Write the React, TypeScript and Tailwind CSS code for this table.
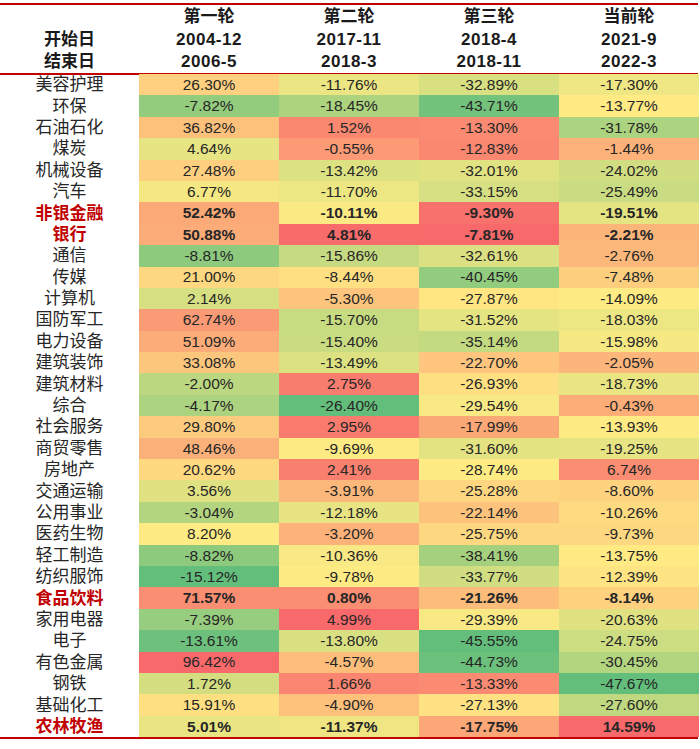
import React from "react";

type Row = { name: string; v: number[]; hl?: boolean };

const rows: Row[] = [
	{ name: "美容护理", v: [26.3, -11.76, -32.89, -17.3] },
	{ name: "环保", v: [-7.82, -18.45, -43.71, -13.77] },
	{ name: "石油石化", v: [36.82, 1.52, -13.3, -31.78] },
	{ name: "煤炭", v: [4.64, -0.55, -12.83, -1.44] },
	{ name: "机械设备", v: [27.48, -13.42, -32.01, -24.02] },
	{ name: "汽车", v: [6.77, -11.7, -33.15, -25.49] },
	{ name: "非银金融", v: [52.42, -10.11, -9.3, -19.51], hl: true },
	{ name: "银行", v: [50.88, 4.81, -7.81, -2.21], hl: true },
	{ name: "通信", v: [-8.81, -15.86, -32.61, -2.76] },
	{ name: "传媒", v: [21.0, -8.44, -40.45, -7.48] },
	{ name: "计算机", v: [2.14, -5.3, -27.87, -14.09] },
	{ name: "国防军工", v: [62.74, -15.7, -31.52, -18.03] },
	{ name: "电力设备", v: [51.09, -15.4, -35.14, -15.98] },
	{ name: "建筑装饰", v: [33.08, -13.49, -22.7, -2.05] },
	{ name: "建筑材料", v: [-2.0, 2.75, -26.93, -18.73] },
	{ name: "综合", v: [-4.17, -26.4, -29.54, -0.43] },
	{ name: "社会服务", v: [29.8, 2.95, -17.99, -13.93] },
	{ name: "商贸零售", v: [48.46, -9.69, -31.6, -19.25] },
	{ name: "房地产", v: [20.62, 2.41, -28.74, 6.74] },
	{ name: "交通运输", v: [3.56, -3.91, -25.28, -8.6] },
	{ name: "公用事业", v: [-3.04, -12.18, -22.14, -10.26] },
	{ name: "医药生物", v: [8.2, -3.2, -25.75, -9.73] },
	{ name: "轻工制造", v: [-8.82, -10.36, -38.41, -13.75] },
	{ name: "纺织服饰", v: [-15.12, -9.78, -33.77, -12.39] },
	{ name: "食品饮料", v: [71.57, 0.8, -21.26, -8.14], hl: true },
	{ name: "家用电器", v: [-7.39, 4.99, -29.39, -20.63] },
	{ name: "电子", v: [-13.61, -13.8, -45.55, -24.75] },
	{ name: "有色金属", v: [96.42, -4.57, -44.73, -30.45] },
	{ name: "钢铁", v: [1.72, 1.66, -13.33, -47.67] },
	{ name: "基础化工", v: [15.91, -4.9, -27.13, -27.6] },
	{ name: "农林牧渔", v: [5.01, -11.37, -17.75, 14.59], hl: true },
];

const heads = [
	["第一轮", "2004-12", "2006-5"],
	["第二轮", "2017-11", "2018-3"],
	["第三轮", "2018-4", "2018-11"],
	["当前轮", "2021-9", "2022-3"],
];

const GREEN = [0x63, 0xbe, 0x7b];
const YELLOW = [0xff, 0xeb, 0x84];
const RED = [0xf8, 0x69, 0x6b];

// excel style 3-colour scale: min green, median yellow, max red
function scale(col: number[]) {
	const s = [...col].sort((a, b) => a - b);
	const pos = (s.length - 1) / 2;
	const lo = Math.floor(pos);
	const mid = s[lo] + (s[Math.ceil(pos)] - s[lo]) * (pos - lo);
	const min = s[0];
	const max = s[s.length - 1];
	return (x: number) => {
		let a: number[], b: number[], t: number;
		if (x <= mid) {
			a = GREEN;
			b = YELLOW;
			t = (x - min) / (mid - min || 1);
		} else {
			a = YELLOW;
			b = RED;
			t = (x - mid) / (max - mid || 1);
		}
		const c = a.map((n, i) => Math.round(n + (b[i] - n) * t));
		return `rgb(${c[0]},${c[1]},${c[2]})`;
	};
}

const scales = [0, 1, 2, 3].map((i) => scale(rows.map((r) => r.v[i])));

const font = { fontFamily: '"Liberation Sans","Noto Sans CJK SC",sans-serif' };

export default function App() {
	return (
		<div className="w-[700px] h-[749px] bg-white pt-[3px]" style={font}>
			<div className="w-[698px] border-t-2 border-b-2 border-[#c00000]">
				<div className="grid grid-cols-[139px_repeat(4,140px)] font-bold text-[17px] text-[#1a1a1a]">
					<div className="flex flex-col">
						<div className="h-[23px]" />
						<div className="h-[23px] flex items-center justify-center">开始日</div>
						<div className="h-[22px] flex items-center justify-center">结束日</div>
					</div>
					{heads.map((h) => (
						<div key={h[0]} className="flex flex-col">
							<div className="h-[23px] flex items-center justify-center">{h[0]}</div>
							<div className="h-[23px] flex items-center justify-center tracking-[0.5px]">{h[1]}</div>
							<div className="h-[22px] flex items-center justify-center tracking-[0.5px]">{h[2]}</div>
						</div>
					))}
				</div>
			</div>
			<div className="w-[698px] -mt-[1px] border-b-2 border-[#c00000]">
				{rows.map((r) => (
					<div key={r.name} className="grid grid-cols-[139px_repeat(4,140px)] h-[21.4px]">
						<div
							className={
								"flex items-center justify-center text-[17px] leading-none " +
								(r.hl ? "font-bold text-[#c00000]" : "text-[#262626]")
							}
						>
							{r.name}
						</div>
						{r.v.map((x, i) => (
							<div
								key={i}
								className={
									"flex items-center justify-center text-[15.5px] leading-none text-[#262626] " +
									(r.hl ? "font-bold text-[#111]" : "")
								}
								style={{ backgroundColor: scales[i](x) }}
							>
								{x.toFixed(2) + "%"}
							</div>
						))}
					</div>
				))}
			</div>
		</div>
	);
}
